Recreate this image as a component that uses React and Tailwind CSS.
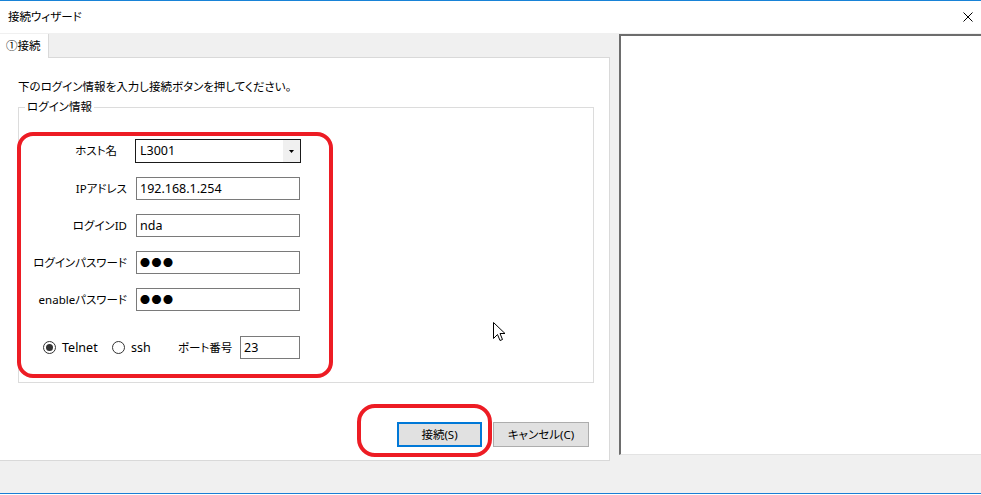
import React from 'react';

const font = "font-['Noto_Sans','Noto_Sans_CJK_JP',sans-serif] [font-feature-settings:'palt']";

const Field = ({ label, children, className = '' }) => (
  <div className={`flex items-center ${className}`}>
    <div className="w-[106px] text-right leading-[16px]">{label}</div>
    {children}
  </div>
);

const TextBox = ({ value, password }) => (
  <div className="ml-[9px] flex h-[23px] w-[164px] items-center border border-[#7a7a7a] bg-white pl-[3px] leading-[16px]">
    {password ? (
      <span className="text-[10px] tracking-[1.5px] font-['Noto_Sans_CJK_JP']">{value}</span>
    ) : (
      <span className="text-[12.5px]">{value}</span>
    )}
  </div>
);

const Radio = ({ checked, label, className = '' }) => (
  <div className={`flex items-center ${className}`}>
    <span className="flex h-[13px] w-[13px] items-center justify-center rounded-full border border-[#333] bg-white">
      {checked && <span className="h-[7px] w-[7px] rounded-full bg-[#333]" />}
    </span>
    <span className="ml-[6px] text-[12.5px] leading-[16px]">{label}</span>
  </div>
);

export default function App() {
  return (
    <div className={`relative flex h-[495px] w-[981px] flex-col overflow-hidden bg-[#f0f0f0] text-[11.5px] text-black ${font}`}>
      <div className="h-px bg-[#1883d7]" />

      {/* Title bar */}
      <div className="flex h-[32px] items-center justify-between bg-white pl-[8px] pr-[8px]">
        <span className="leading-[16px]">接続ウィザード</span>
        <svg width="10" height="10" viewBox="0 0 10 10">
          <path d="M0.5 0.5 L9.5 9.5 M9.5 0.5 L0.5 9.5" stroke="#000" strokeWidth="1" />
        </svg>
      </div>

      {/* Body */}
      <div className="flex flex-1">
        <div className="flex w-[610px] flex-col pt-px">
          {/* Tab strip */}
          <div className="flex h-[24px]">
            <div className="flex w-[49px] items-center border-r border-[#d9d9d9] bg-white pl-[6px] leading-[16px]">①接続</div>
            <div className="flex-1 border-b border-[#d9d9d9]" />
          </div>

          {/* Tab page */}
          <div className="flex flex-1 flex-col border-r border-b border-[#d9d9d9] bg-white">
            <p className="ml-[18px] mt-[21px] leading-[16px]">下のログイン情報を入力し接続ボタンを押してください。</p>

            <fieldset className="ml-[18px] mt-[4px] w-[576px] border border-[#dcdcdc] px-0 pb-[4px]">
              <legend className="ml-[6px] px-[2px] leading-[16px]">ログイン情報</legend>

              <div className="ml-[-2px] mt-[17px] w-[316px] rounded-[16px] border-[4px] border-[#ed1c24] pt-[3px] pb-[15px]">
                <Field label={<span className="pr-[10px]">ホスト名</span>}>
                  <div className="ml-[8px] flex h-[24px] w-[166px] items-center border border-[#1a1a1a] bg-white">
                    <span className="flex-1 pl-[4px] text-[12.5px] leading-[16px]">L3001</span>
                    <span className="flex h-full w-[17px] items-center justify-center bg-[#f0f0f0]">
                      <svg width="5" height="3" viewBox="0 0 5 3">
                        <path d="M0 0 H5 L2.5 3 Z" fill="#000" />
                      </svg>
                    </span>
                  </div>
                </Field>
                <Field label="IPアドレス" className="mt-[14px]">
                  <TextBox value="192.168.1.254" />
                </Field>
                <Field label="ログインID" className="mt-[14px]">
                  <TextBox value="nda" />
                </Field>
                <Field label="ログインパスワード" className="mt-[14px]">
                  <TextBox value="●●●" password />
                </Field>
                <Field label="enableパスワード" className="mt-[14px]">
                  <TextBox value="●●●" password />
                </Field>

                <div className="mt-[25px] flex items-center pl-[22px]">
                  <Radio checked label="Telnet" className="w-[69px]" />
                  <Radio label="ssh" className="w-[66px]" />
                  <span className="w-[62px] leading-[16px]">ポート番号</span>
                  <div className="flex h-[23px] w-[60px] items-center border border-[#7a7a7a] bg-white pl-[3px] text-[12.5px] leading-[16px]">23</div>
                </div>
              </div>
            </fieldset>

            {/* Buttons */}
            <div className="mt-[21px] flex items-start justify-end pr-[20px]">
              <div className="rounded-[18px] border-[4px] border-[#ed1c24] pt-[14px] pr-[6px] pb-[6px] pl-[36px]">
                <button className="flex h-[25px] w-[85px] items-center justify-center border-2 border-[#0078d7] bg-[#e1e1e1] leading-[16px]">
                  接続(S)
                </button>
              </div>
              <button className="ml-px mt-[18px] flex h-[25px] w-[96px] items-center justify-center border border-[#adadad] bg-[#e1e1e1] leading-[16px]">
                キャンセル(C)
              </button>
            </div>
          </div>
        </div>

        {/* Right panel */}
        <div className="ml-[9px] mt-px mb-[6px] flex-1 border-l-2 border-t-2 border-b border-l-[#6d6d6d] border-t-[#6d6d6d] border-b-[#e3e3e3] bg-white" />
      </div>

      {/* Status area */}
      <div className="h-[32px] bg-[#f0f0f0]" />
      <div className="h-px bg-[#1a7fd4]" />
      <div className="h-px bg-white" />

      {/* Mouse pointer */}
      <svg className="absolute left-[493px] top-[322px]" width="13" height="21" viewBox="0 0 13 21">
        <path d="M0.5 0.5 V16.5 L4.5 12.5 L7 18.5 L9.5 17.5 L7 11.5 H12 Z" fill="#fff" stroke="#000" strokeWidth="1" strokeLinejoin="round" />
      </svg>
    </div>
  );
}
